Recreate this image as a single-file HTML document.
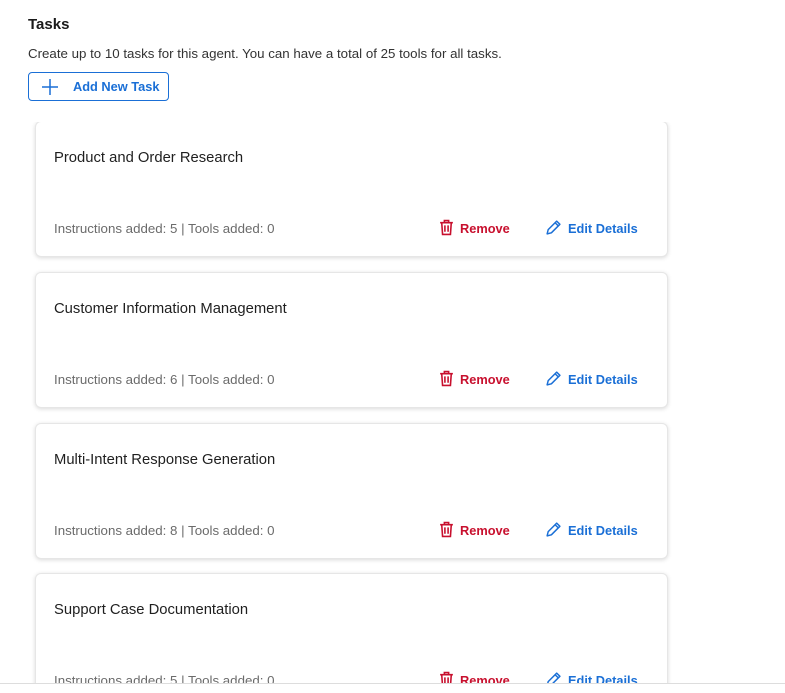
<!DOCTYPE html>
<html><head><style>
body{margin:0;width:785px;height:693px;background:#fff;font-family:"Liberation Sans",sans-serif;color:#222;overflow:hidden;position:relative}
h1{position:absolute;left:28px;top:16px;margin:0;font-size:15px;font-weight:bold;color:#1a1a1a}
.desc{position:absolute;left:28px;top:46px;font-size:13.3px;color:#333}
.btn{position:absolute;left:28px;top:72px;width:139px;height:27px;border:1px solid #1a6fd6;border-radius:4px;color:#1a6fd6;font-size:12.8px;font-weight:bold;box-sizing:content-box}
.btn svg{position:absolute;left:12px;top:5px}
.btn span{position:absolute;left:44px;top:6px}
.scroll{position:absolute;left:0;top:122px;width:785px;height:561px;overflow:hidden;border-bottom:1px solid #ddd}
.card{position:absolute;left:35px;width:631px;height:134px;border:1px solid #e6e6e6;border-radius:6px;box-shadow:0 1px 4px rgba(0,0,0,.15);background:#fff}
.t{position:absolute;left:18px;top:28px;font-size:14.8px;color:#1f1f1f}
.m{position:absolute;left:18px;top:99px;font-size:13.3px;color:#6b6b6b}
.rm{position:absolute;left:403px;top:97px;color:#c8102e;font-size:12.8px;font-weight:bold}
.ed{position:absolute;left:509px;top:97px;color:#1a6fd6;font-size:12.8px;font-weight:bold}
.rm svg,.ed svg{vertical-align:-3px;margin-right:6px}
</style></head><body>
<h1>Tasks</h1>
<div class="desc">Create up to 10 tasks for this agent. You can have a total of 25 tools for all tasks.</div>
<div class="btn"><svg width="18" height="18" viewBox="0 0 18 18"><path d="M9 1v16M1 9h16" stroke="#1a6fd6" stroke-width="1.5"/></svg><span>Add New Task</span></div>
<div class="scroll">
<div class="card" style="top:-1px"><div class="t">Product and Order Research</div><div class="m">Instructions added: 5 | Tools added: 0</div>
<div class="rm"><svg width="15" height="17" viewBox="0 0 14 16"><path d="M1 3.5h12M5 3.5V1.5h4v2M2.5 3.5l.8 11h7.4l.8-11M5.5 6v6M8.5 6v6" stroke="#c8102e" stroke-width="1.5" fill="none"/></svg>Remove</div>
<div class="ed"><svg width="17" height="17" viewBox="0 0 16 16"><path d="M2 14l1-4 8-8 3 3-8 8zM9.5 3.5l3 3" stroke="#1a6fd6" stroke-width="1.4" fill="none" stroke-linejoin="round"/></svg>Edit Details</div></div>
<div class="card" style="top:150px"><div class="t">Customer Information Management</div><div class="m">Instructions added: 6 | Tools added: 0</div>
<div class="rm"><svg width="15" height="17" viewBox="0 0 14 16"><path d="M1 3.5h12M5 3.5V1.5h4v2M2.5 3.5l.8 11h7.4l.8-11M5.5 6v6M8.5 6v6" stroke="#c8102e" stroke-width="1.5" fill="none"/></svg>Remove</div>
<div class="ed"><svg width="17" height="17" viewBox="0 0 16 16"><path d="M2 14l1-4 8-8 3 3-8 8zM9.5 3.5l3 3" stroke="#1a6fd6" stroke-width="1.4" fill="none" stroke-linejoin="round"/></svg>Edit Details</div></div>
<div class="card" style="top:301px"><div class="t">Multi-Intent Response Generation</div><div class="m">Instructions added: 8 | Tools added: 0</div>
<div class="rm"><svg width="15" height="17" viewBox="0 0 14 16"><path d="M1 3.5h12M5 3.5V1.5h4v2M2.5 3.5l.8 11h7.4l.8-11M5.5 6v6M8.5 6v6" stroke="#c8102e" stroke-width="1.5" fill="none"/></svg>Remove</div>
<div class="ed"><svg width="17" height="17" viewBox="0 0 16 16"><path d="M2 14l1-4 8-8 3 3-8 8zM9.5 3.5l3 3" stroke="#1a6fd6" stroke-width="1.4" fill="none" stroke-linejoin="round"/></svg>Edit Details</div></div>
<div class="card" style="top:451px"><div class="t">Support Case Documentation</div><div class="m">Instructions added: 5 | Tools added: 0</div>
<div class="rm"><svg width="15" height="17" viewBox="0 0 14 16"><path d="M1 3.5h12M5 3.5V1.5h4v2M2.5 3.5l.8 11h7.4l.8-11M5.5 6v6M8.5 6v6" stroke="#c8102e" stroke-width="1.5" fill="none"/></svg>Remove</div>
<div class="ed"><svg width="17" height="17" viewBox="0 0 16 16"><path d="M2 14l1-4 8-8 3 3-8 8zM9.5 3.5l3 3" stroke="#1a6fd6" stroke-width="1.4" fill="none" stroke-linejoin="round"/></svg>Edit Details</div></div>
</div>
</body></html>
